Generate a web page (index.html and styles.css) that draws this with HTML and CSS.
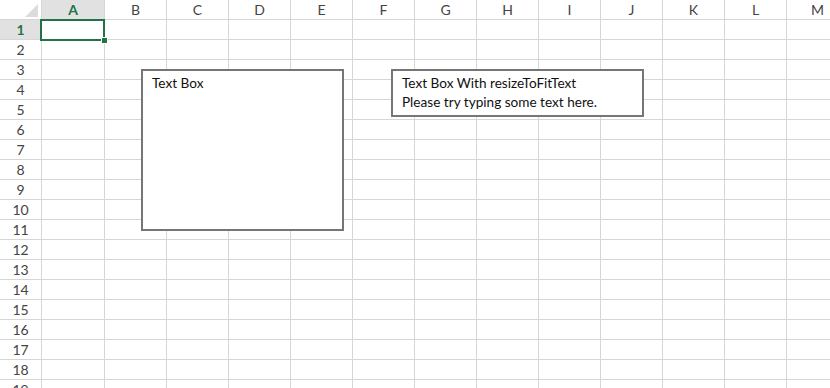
FILE: index.html
```html
<!DOCTYPE html>
<html lang="en">
<head>
<meta charset="UTF-8">
<title>Text Box</title>
<link rel="stylesheet" href="styles.css">
</head>
<body>
<div class="sheet">
  <table class="grid">
    <colgroup>
      <col class="col-head">
      <col class="col-a">
      <col span="12" class="col">
    </colgroup>
    <tr class="head">
      <th class="corner"><span class="tri"></span></th>
      <th class="sel">A</th><th>B</th><th>C</th><th>D</th><th>E</th><th>F</th><th>G</th><th>H</th><th>I</th><th>J</th><th>K</th><th>L</th><th>M</th>
    </tr>
    <tr><th class="sel">1</th><td></td><td></td><td></td><td></td><td></td><td></td><td></td><td></td><td></td><td></td><td></td><td></td><td></td></tr>
    <tr><th>2</th><td></td><td></td><td></td><td></td><td></td><td></td><td></td><td></td><td></td><td></td><td></td><td></td><td></td></tr>
    <tr><th>3</th><td></td><td></td><td></td><td></td><td></td><td></td><td></td><td></td><td></td><td></td><td></td><td></td><td></td></tr>
    <tr><th>4</th><td></td><td></td><td></td><td></td><td></td><td></td><td></td><td></td><td></td><td></td><td></td><td></td><td></td></tr>
    <tr><th>5</th><td></td><td></td><td></td><td></td><td></td><td></td><td></td><td></td><td></td><td></td><td></td><td></td><td></td></tr>
    <tr><th>6</th><td></td><td></td><td></td><td></td><td></td><td></td><td></td><td></td><td></td><td></td><td></td><td></td><td></td></tr>
    <tr><th>7</th><td></td><td></td><td></td><td></td><td></td><td></td><td></td><td></td><td></td><td></td><td></td><td></td><td></td></tr>
    <tr><th>8</th><td></td><td></td><td></td><td></td><td></td><td></td><td></td><td></td><td></td><td></td><td></td><td></td><td></td></tr>
    <tr><th>9</th><td></td><td></td><td></td><td></td><td></td><td></td><td></td><td></td><td></td><td></td><td></td><td></td><td></td></tr>
    <tr><th>10</th><td></td><td></td><td></td><td></td><td></td><td></td><td></td><td></td><td></td><td></td><td></td><td></td><td></td></tr>
    <tr><th>11</th><td></td><td></td><td></td><td></td><td></td><td></td><td></td><td></td><td></td><td></td><td></td><td></td><td></td></tr>
    <tr><th>12</th><td></td><td></td><td></td><td></td><td></td><td></td><td></td><td></td><td></td><td></td><td></td><td></td><td></td></tr>
    <tr><th>13</th><td></td><td></td><td></td><td></td><td></td><td></td><td></td><td></td><td></td><td></td><td></td><td></td><td></td></tr>
    <tr><th>14</th><td></td><td></td><td></td><td></td><td></td><td></td><td></td><td></td><td></td><td></td><td></td><td></td><td></td></tr>
    <tr><th>15</th><td></td><td></td><td></td><td></td><td></td><td></td><td></td><td></td><td></td><td></td><td></td><td></td><td></td></tr>
    <tr><th>16</th><td></td><td></td><td></td><td></td><td></td><td></td><td></td><td></td><td></td><td></td><td></td><td></td><td></td></tr>
    <tr><th>17</th><td></td><td></td><td></td><td></td><td></td><td></td><td></td><td></td><td></td><td></td><td></td><td></td><td></td></tr>
    <tr><th>18</th><td></td><td></td><td></td><td></td><td></td><td></td><td></td><td></td><td></td><td></td><td></td><td></td><td></td></tr>
    <tr><th>19</th><td></td><td></td><td></td><td></td><td></td><td></td><td></td><td></td><td></td><td></td><td></td><td></td><td></td></tr>
  </table>

  <!-- active cell A1 -->
  <div class="selection"><span class="handle"></span></div>

  <!-- shapes -->
  <div class="textbox box-one">Text Box</div>
  <div class="textbox box-two">Text Box With resizeToFitText<br>Please try typing some text here.</div>
</div>
</body>
</html>
```

FILE: styles.css
```css
html, body {
  margin: 0;
  padding: 0;
  background: #fff;
  overflow: hidden;
}

.sheet {
  position: relative;
  width: 830px;
  height: 388px;
  overflow: hidden;
}

.grid {
  border-collapse: separate;
  border-spacing: 0;
  table-layout: fixed;
  width: 849px;
  font-family: Lato, "Open Sans", sans-serif;
  font-size: 14px;
  color: #444;
}

.col-head { width: 42px; }
.col-a { width: 63px; }
.col { width: 62px; }

.grid th,
.grid td {
  box-sizing: border-box;
  height: 20px;
  padding: 0;
  border-right: 1px solid #d6d6d6;
  border-bottom: 1px solid #d6d6d6;
}

.grid th {
  font-weight: normal;
  text-align: center;
  line-height: 18px;
  background: #fff;
}

.grid th.sel {
  background: #e1e1e1;
  color: #217346;
  font-weight: bold;
}

.corner {
  position: relative;
}

.tri {
  position: absolute;
  right: 3px;
  bottom: 2px;
  width: 0;
  height: 0;
  border-left: 13px solid transparent;
  border-bottom: 13px solid #dcdcdc;
}

.selection {
  position: absolute;
  left: 40px;
  top: 19px;
  width: 65px;
  height: 22px;
  box-sizing: border-box;
  border: 2px solid #217346;
}

.handle {
  position: absolute;
  right: -5px;
  bottom: -5px;
  width: 5px;
  height: 5px;
  background: #217346;
  border: 1px solid #fff;
}

.textbox {
  position: absolute;
  box-sizing: border-box;
  background: #fff;
  border: 2px solid #767676;
  padding: 3px 9px;
  font-family: Lato, "Open Sans", sans-serif;
  font-size: 13.6px;
  line-height: 19px;
  color: #111;
}

.box-one {
  left: 141px;
  top: 69px;
  width: 203px;
  height: 162px;
}

.box-two {
  left: 391px;
  top: 69px;
  width: 253px;
  height: 48px;
}
```
